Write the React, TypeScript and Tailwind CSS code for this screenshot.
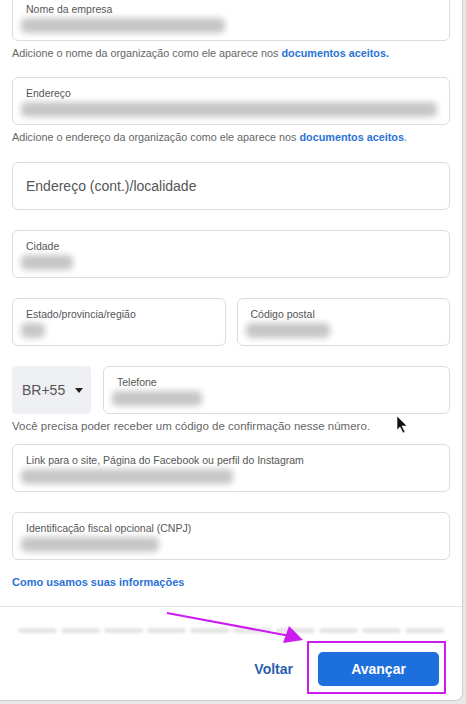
import type { ReactNode } from "react";

const font = { fontFamily: '"Liberation Sans", Arial, sans-serif' };

function Blur({ w }: { w: number }) {
  return (
    <div
      className="h-[15px] rounded-[5px] bg-[#c6c6c6] blur-[3px]"
      style={{ width: w }}
    />
  );
}

function Field({ label, blur, className = "" }: { label: string; blur: number; className?: string }) {
  return (
    <div className={`h-[48px] rounded-[6px] border border-[#dcdcdc] px-[13px] pt-[9px] ${className}`}>
      <div className="text-[10.5px] leading-[13px] text-[#555]">{label}</div>
      <div className="mt-[2px] -ml-[5px]">
        <Blur w={blur} />
      </div>
    </div>
  );
}

function Helper({ children, className = "" }: { children: ReactNode; className?: string }) {
  return <p className={`leading-[16px] text-[#666] ${className}`}>{children}</p>;
}

export default function App() {
  return (
    <div className="relative h-[704px] w-[466px] overflow-hidden bg-[#e8e8e8]" style={font}>
      <div className="relative flex h-[701px] w-[463px] flex-col overflow-hidden rounded-br-[8px] border-r border-b border-[#cfcfcf] bg-white">
        <div className="-mt-[7px] flex flex-col px-[12px]">
          <Field label="Nome da empresa" blur={204} />
          <Helper className="mt-[4px] text-[10.8px]">
            Adicione o nome da organização como ele aparece nos{" "}
            <span className="font-bold text-[#2a72d6]">documentos aceitos.</span>
          </Helper>

          <Field label="Endereço" blur={416} className="mt-[16px]" />
          <Helper className="mt-[4px] text-[10.8px]">
            Adicione o endereço da organização como ele aparece nos{" "}
            <span className="font-bold text-[#2a72d6]">documentos aceitos</span>.
          </Helper>

          <div className="mt-[17px] flex h-[48px] items-center rounded-[6px] border border-[#dcdcdc] px-[13px] text-[14px] text-[#555]">
            Endereço (cont.)/localidade
          </div>

          <Field label="Cidade" blur={52} className="mt-[20px]" />

          <div className="mt-[20px] grid grid-cols-2 gap-[11px]">
            <Field label="Estado/provincia/região" blur={24} />
            <Field label="Código postal" blur={84} />
          </div>

          <div className="mt-[20px] flex gap-[12px]">
            <div className="flex h-[48px] w-[79px] items-center gap-[10px] rounded-[4px] bg-[#eef0f3] pl-[10px] text-[14px] text-[#555]">
              BR+55
              <svg width="8" height="5" viewBox="0 0 8 5">
                <path d="M0 0h8L4 5z" fill="#222" />
              </svg>
            </div>
            <Field label="Telefone" blur={90} className="flex-1" />
          </div>
          <Helper className="mt-[4px] text-[11.5px]">Você precisa poder receber um código de confirmação nesse número.</Helper>

          <Field label="Link para o site, Página do Facebook ou perfil do Instagram" blur={212} className="mt-[10px]" />

          <Field label="Identificação fiscal opcional (CNPJ)" blur={138} className="mt-[20px]" />

          <p className="mt-[14px] text-[11px] font-bold leading-[16px] text-[#2a72d6]">
            Como usamos suas informações
          </p>
        </div>

        <div className="mt-[16px] border-t border-[#e4e4e4]" />

        <div className="mt-[21px] flex gap-[4px] px-[18px]">
          {Array.from({ length: 10 }).map((_, i) => (
            <div key={i} className="h-[5px] flex-1 rounded-full bg-[#e4e4e4] blur-[1.5px]" />
          ))}
        </div>

        <div className="mt-[19px] flex items-center justify-end gap-[25px] pr-[23px]">
          <span className="text-[14px] font-bold text-[#2a5fb0]">Voltar</span>
          <div className="flex h-[34px] w-[121px] items-center justify-center rounded-[5px] bg-[#1c6fdc] text-[14px] font-bold text-white">
            Avançar
          </div>
        </div>

        {/* annotation */}
        <div className="absolute left-[307px] top-[641px] h-[53px] w-[139px] border-2 border-[#cc1cf0]" />
        <svg className="absolute left-0 top-0" width="463" height="701" viewBox="0 0 463 701">
          <line x1="167" y1="613" x2="290" y2="636" stroke="#cc1cf0" strokeWidth="2" />
          <path d="M303 640 L283 643 L289 626 Z" fill="#cc1cf0" />
          <path d="M397 416 L397 430 L400 427 L403 433 L405 432 L402 426 L407 426 Z" fill="#111" stroke="#fff" strokeWidth="0.6" />
        </svg>
      </div>
    </div>
  );
}
